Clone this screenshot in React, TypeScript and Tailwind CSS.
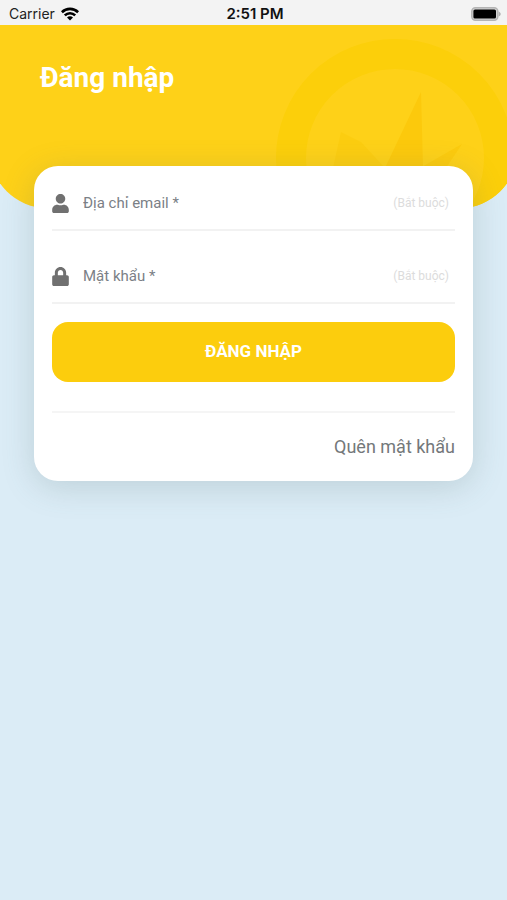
import { FaLock, FaUser } from "react-icons/fa";
import type { ReactNode } from "react";

function WifiIcon() {
  return (
    <svg viewBox="0 0 18 14" className="h-3.5 w-4.5" aria-hidden="true">
      <g fill="none" stroke="#000" strokeWidth="2.6">
        <path d="M0.9 5.2a11.6 11.6 0 0 1 16.2 0" />
        <path d="M3.8 8.4a7.4 7.4 0 0 1 10.4 0" />
      </g>
      <path d="M9 13.6l-3-3.1a4.2 4.2 0 0 1 6 0z" />
    </svg>
  );
}

function BatteryIcon() {
  return (
    <svg viewBox="0 0 30 14" className="h-3.5 w-7.5" aria-hidden="true">
      <rect x="0.8" y="0.8" width="26" height="12.4" rx="3.6" fill="#d4d4d4" stroke="#b4b4b4" strokeWidth="1.5" />
      <rect x="2.4" y="2.4" width="22.6" height="9.2" rx="1.6" />
      <path d="M27.6 4.4c2.8 1.2 2.8 4 0 5.2z" fill="#b0b0b0" />
    </svg>
  );
}

function StatusBar() {
  return (
    <div className="grid h-[25px] grid-cols-3 items-center bg-[#f3f3f3] pt-0.5 pr-1.5 pl-[9px] font-[Inter,sans-serif] text-sm text-[#222]">
      <span className="flex items-center gap-1.5">
        Carrier <WifiIcon />
      </span>
      <span className="text-center text-[15px] font-semibold text-[#111]">2:51 PM</span>
      <span className="flex justify-end">
        <BatteryIcon />
      </span>
    </div>
  );
}

function Emblem() {
  return (
    <svg viewBox="0 0 240 240" className="absolute top-[13px] right-0.5 size-60" aria-hidden="true">
      <circle cx="120" cy="120" r="104" fill="none" stroke="#fccf0a" strokeWidth="30" />
      <path d="M146 54l-36 76h38z" fill="#fcc90c" />
      <path d="M66 94l20 10 24 26H58z" fill="#fccd10" />
      <path d="M187 106l-42 24h26z" fill="#fccb0e" />
    </svg>
  );
}

type FieldProps = { id: string; label: string; type: string; icon: ReactNode };

function Field({ id, label, type, icon }: FieldProps) {
  return (
    <div className="flex h-14 items-center border-b-2 border-[#f2f2f2] pt-0.5 pr-1.5 text-[#707070]">
      <label htmlFor={id} aria-label={label} className="w-[31px]">
        {icon}
      </label>
      <input
        id={id}
        type={type}
        placeholder={label}
        className="min-w-0 flex-1 text-[15px] leading-5 outline-none placeholder:text-[#7b8086]"
      />
      <span className="text-xs text-[#dcdcdc]">(Bắt buộc)</span>
    </div>
  );
}

export default function App() {
  return (
    <div className="min-h-screen overflow-hidden bg-[#dbecf6] font-[Roboto,sans-serif]">
      <StatusBar />
      <header className="relative -mx-2.5 h-[183px] overflow-hidden rounded-b-[57px] bg-[#fed118] px-[50px] pt-[33px]">
        <Emblem />
        <h1 className="relative text-[28px] leading-10 font-bold text-white">Đăng nhập</h1>
      </header>
      <main className="relative mx-[34px] -mt-[42px] rounded-3xl bg-white px-[18px] pt-[9px] pb-5 shadow-[0_6px_32px_rgba(80,110,110,0.22)]">
        <form onSubmit={(event) => event.preventDefault()}>
          <div className="flex flex-col gap-[17px]">
            <Field id="email" label="Địa chỉ email *" type="email" icon={<FaUser className="h-[19px] w-[17px]" />} />
            <Field id="password" label="Mật khẩu *" type="password" icon={<FaLock className="h-[19px] w-[17px]" />} />
          </div>
          <button type="submit" className="mt-[18px] h-15 w-full rounded-2xl bg-[#fccd0d] text-[17px] font-bold text-white">
            ĐĂNG NHẬP
          </button>
        </form>
        <div className="mt-[29px] border-t-2 border-[#f5f5f5] pt-5 text-right">
          <a href="#forgot" className="text-lg leading-7 text-[#74787a]">
            Quên mật khẩu
          </a>
        </div>
      </main>
    </div>
  );
}
